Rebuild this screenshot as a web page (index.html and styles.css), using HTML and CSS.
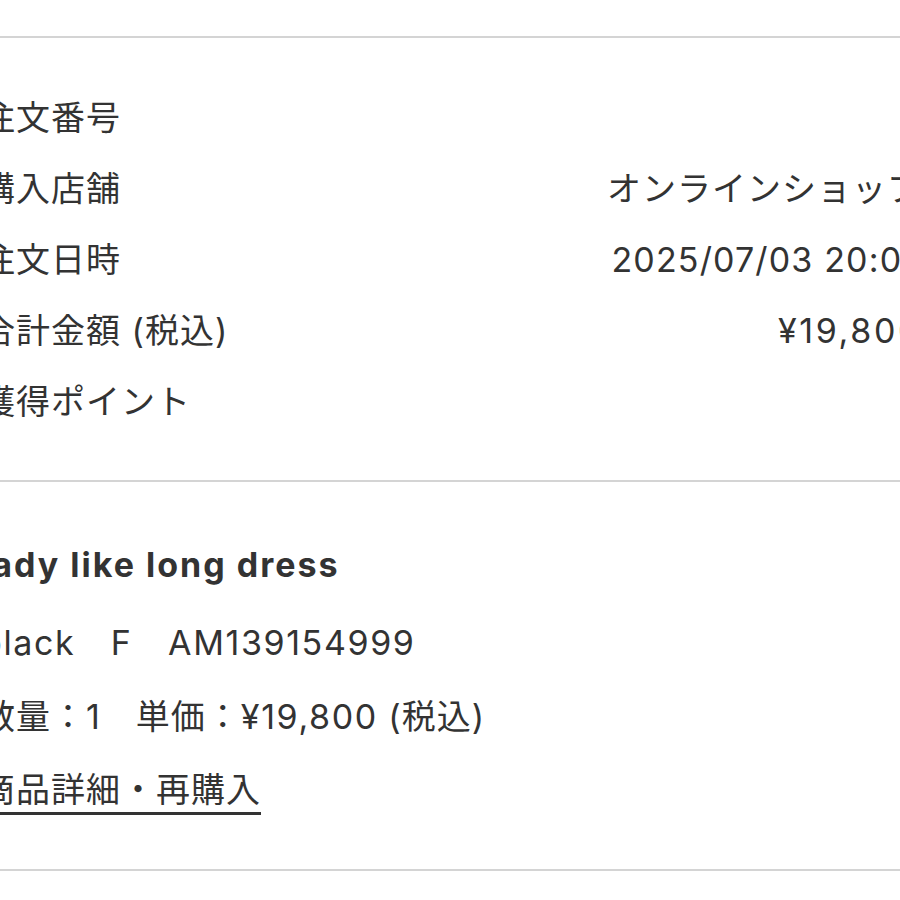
FILE: index.html
```html
<!DOCTYPE html>
<html lang="ja">
<head>
<meta charset="utf-8">
<link rel="stylesheet" href="styles.css">
</head>
<body>
<div class="page">
  <div class="rule rule-top"></div>
  <section class="summary">
    <div class="row"><span class="label">注文番号</span><span class="value"></span></div>
    <div class="row"><span class="label">購入店舗</span><span class="value">オンラインショップ</span></div>
    <div class="row"><span class="label">注文日時</span><span class="value en date">2025/07/03 20:07</span></div>
    <div class="row"><span class="label">合計金額 (税込)</span><span class="value en price">¥19,800</span></div>
    <div class="row"><span class="label">獲得ポイント</span><span class="value"></span></div>
  </section>
  <div class="rule"></div>
  <section class="product">
    <div class="title">lady like long dress</div>
    <div class="line en">black　F　AM139154999</div>
    <div class="line">数量：1　単価：<span class="en">¥19,800</span> (税込)</div>
    <a class="link" href="#">商品詳細・再購入</a>
  </section>
  <div class="rule"></div>
</div>
</body>
</html>
```

FILE: styles.css
```css
html, body {
  margin: 0;
  padding: 0;
  background: #ffffff;
  overflow: hidden;
}
body {
  width: 900px;
  height: 900px;
  font-family: "Inter", "Noto Sans CJK JP", sans-serif;
  color: #333333;
  font-size: 34px;
  letter-spacing: 1px;
}
.page {
  margin-left: -19px;
  width: 941px;
}
.rule {
  height: 2px;
  background: #d4d4d4;
}
.rule-top {
  margin-top: 36px;
}
.summary {
  padding: 44px 0 43px;
}
.row {
  display: flex;
  justify-content: space-between;
  line-height: 71px;
  height: 71px;
}
.value {
  text-align: right;
}
.en {
  letter-spacing: 1.6px;
}
.date {
  letter-spacing: 1.15px;
}
.price {
  letter-spacing: 2.6px;
}
.product {
  padding: 46px 0 54px;
}
.title {
  font-weight: 700;
  letter-spacing: 2px;
  line-height: 74px;
  margin-bottom: 4px;
}
.line {
  line-height: 74px;
}
.link {
  display: inline-block;
  margin-top: 14px;
  line-height: 44px;
  color: #333333;
  text-decoration: none;
  border-bottom: 3px solid #333333;
}
```
